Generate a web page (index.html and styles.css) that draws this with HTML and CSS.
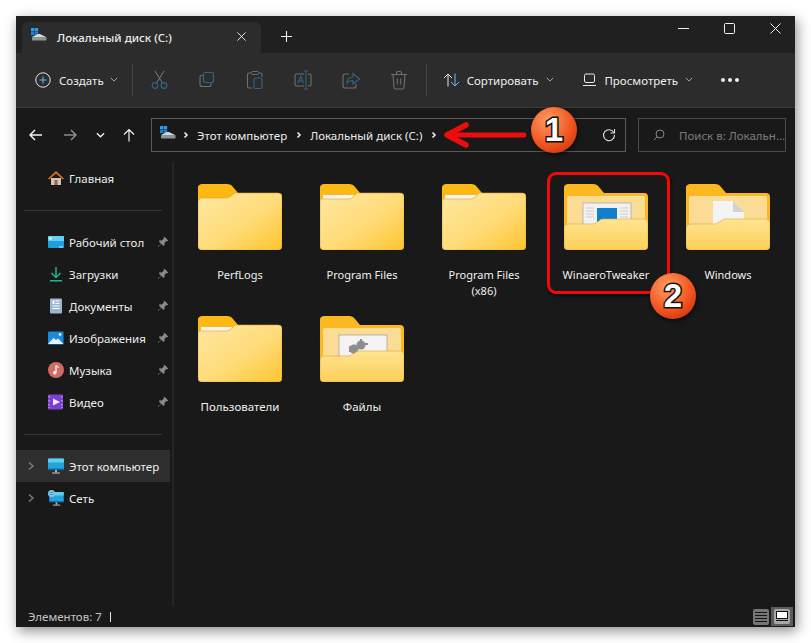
FILE: index.html
```html
<!DOCTYPE html>
<html lang="ru">
<head>
<meta charset="utf-8">
<title>Локальный диск (C:)</title>
<link rel="stylesheet" href="styles.css">
</head>
<body>
<svg class="defs" width="0" height="0" aria-hidden="true">
  <defs>
    <linearGradient id="fg" x1="0" y1="0" x2="1" y2="1"><stop offset="0" stop-color="#ffe8a2"/><stop offset=".55" stop-color="#ffdb78"/><stop offset="1" stop-color="#fdc52f"/></linearGradient>
    <linearGradient id="ff" x1="0" y1="0" x2="0" y2="1"><stop offset="0" stop-color="#ffe490"/><stop offset="1" stop-color="#fccf58"/></linearGradient>
    <symbol id="closed" viewBox="0 0 84 66">
      <path d="M0 5a4 4 0 0 1 4-5h25q4 0 6 3l5 6h40a4 4 0 0 1 4 4v20H0z" fill="#fdb813"/>
      <path d="M0 20V18q0-4 4-4h24q3 0 5-2l4-3h43q4 0 4 4v49q0 4-4 4H4q-4 0-4-4z" fill="url(#fg)" stroke="#d9a233" stroke-width=".6"/>
    </symbol>
    <symbol id="closedpaper" viewBox="0 0 84 66">
      <path d="M0 5a4 4 0 0 1 4-5h25q4 0 6 3l5 6h40a4 4 0 0 1 4 4v20H0z" fill="#fdb813"/>
      <path d="M3 11h32l-3 4H3z" fill="#f4f4f4"/>
      <path d="M0 20V18q0-4 4-3h24q3 0 5-2l4-4h43q4 0 4 4v49q0 4-4 4H4q-4 0-4-4z" fill="url(#fg)" stroke="#d9a233" stroke-width=".6"/>
    </symbol>
    <symbol id="openback" viewBox="0 0 84 66">
      <path d="M0 5a4 4 0 0 1 4-5h25q4 0 6 3l5 6h40a4 4 0 0 1 4 4v30H0z" fill="#fbb820"/>
      <rect x="3" y="12" width="78" height="32" rx="2" fill="#fbdc94"/>
    </symbol>
    <symbol id="openfront" viewBox="0 0 84 66">
      <path d="M0 44q0-4 4-4h24q3 0 5-2l2-1q1-2 4-2h41q4 0 4 4v23q0 4-4 4H4q-4 0-4-4z" fill="url(#ff)" stroke="#dba738" stroke-width=".6"/>
    </symbol>
    <symbol id="drive" viewBox="0 0 16 13">
      <rect x="0" y="0" width="3.4" height="3.4" fill="#2b9bea"/><rect x="3.8" y="0" width="3.4" height="3.4" fill="#2b9bea"/><rect x="0" y="3.8" width="3.4" height="3.4" fill="#1b7fd0"/><rect x="3.8" y="3.8" width="3.4" height="3.4" fill="#1b7fd0"/>
      <path d="M1 9l6-3h2l6 3z" fill="#d8d8d8"/><rect x="1" y="9" width="14.500" height="3.400" rx=".6" fill="#8d9296"/><rect x="2.500" y="10" width="1.500" height="1.200" fill="#4de05a"/>
    </symbol>
    <symbol id="pin" viewBox="0 0 12 12"><path d="M7.500.8l3.700 3.700-1 .8-.8-.2-2 2 .1 2.100-.9.900-2.300-2.300L1.200 11l-.3-.3 3.100-3.200L1.800 5.200l.9-.9 2.100.1 2-2-.2-.8z" fill="#8b8b8b"/></symbol>
    <symbol id="chev" viewBox="0 0 10 10"><path d="M3 1.500L7 5 3 8.500" fill="none" stroke="currentColor" stroke-width="1.500"/></symbol>
    <symbol id="crumbchev" viewBox="0 0 10 10"><path d="M3.500 2.500L6 5 3.500 7.500" fill="none" stroke="currentColor" stroke-width="1.600"/></symbol>
    <symbol id="down" viewBox="0 0 10 6"><path d="M1 1l4 4 4-4" fill="none" stroke="currentColor" stroke-width="1.100"/></symbol>
    <symbol id="monitor" viewBox="0 0 16 16"><rect x="0" y="0.500" width="16" height="11" rx="1" fill="#27a3d8"/><path d="M0 1.500q0-1 1-1h14q1 0 1 1v3H0z" fill="#5cd0ee"/><rect x="0" y="10.500" width="16" height="1.500" fill="#0f6f9f"/><rect x="7" y="12" width="2" height="2.500" fill="#a8b4ba"/><rect x="4" y="14.500" width="8" height="1" fill="#c4ccd0"/></symbol>
  </defs>
</svg>

<div class="window">
  <header class="titlebar">
    <div class="tab">
      <svg class="i-drive"><use href="#drive"/></svg>
      <span class="tab-title">Локальный диск (C:)</span>
      <svg class="tab-x" viewBox="0 0 10 10"><path d="M.5.500l9 9M9.500.500l-9 9" stroke="#e6e6e6" stroke-width="1.100"/></svg>
    </div>
    <svg class="tab-plus" viewBox="0 0 11 11"><path d="M5.500 0v11M0 5.500h11" stroke="#f0f0f0" stroke-width="1.100"/></svg>
    <div class="winctl">
      <svg class="wc" viewBox="0 0 11 11"><path d="M0 5.500h11" stroke="#f0f0f0" stroke-width="1"/></svg>
      <svg class="wc" viewBox="0 0 11 11"><rect x=".5" y=".5" width="10" height="10" rx="1" fill="none" stroke="#f0f0f0"/></svg>
      <svg class="wc" viewBox="0 0 11 11"><path d="M.5.500l10 10M10.500.500l-10 10" stroke="#f0f0f0" stroke-width="1"/></svg>
    </div>
  </header>

  <div class="toolbar">
    <div class="cmd cmd-new">
      <svg class="ico16" viewBox="0 0 16 16"><circle cx="8" cy="8" r="7.200" fill="none" stroke="#e4e4e4" stroke-width="1"/><path d="M8 4.500v7M4.500 8h7" stroke="#5cc1f5" stroke-width="1"/></svg>
      <span>Создать</span>
      <svg class="dn"><use href="#down"/></svg>
    </div>
    <i class="sep"></i>
    <div class="dim-group">
      <svg class="ico20" viewBox="0 0 20 20"><path d="M5 1l7.500 12M14 1L6.500 13" stroke="#7b7b7b" fill="none"/><circle cx="5" cy="15.500" r="2.800" fill="none" stroke="#2f6583" stroke-width="1.200"/><circle cx="14" cy="15.500" r="2.800" fill="none" stroke="#2f6583" stroke-width="1.200"/></svg>
      <svg class="ico20" viewBox="0 0 20 20"><rect x="6.500" y="2.500" width="10" height="10" rx="2" fill="none" stroke="#2f6583" stroke-width="1.200"/><path d="M6 5.500H5q-2 0-2 2v7q0 2 2 2h7q2 0 2-2v-1" fill="none" stroke="#6f6f6f" stroke-width="1.100"/></svg>
      <svg class="ico20" viewBox="0 0 20 20"><path d="M6 3H4q-1.500 0-1.500 1.500v12Q2.500 18 4 18h3M14 3h2q1 0 1 1.500V7" fill="none" stroke="#6f6f6f" stroke-width="1.100"/><rect x="6.500" y="1.500" width="7" height="3" rx="1" fill="none" stroke="#6f6f6f"/><rect x="9" y="8" width="8" height="10.500" rx="1.500" fill="none" stroke="#2f6583" stroke-width="1.200"/></svg>
      <svg class="ico20" viewBox="0 0 20 20"><path d="M11 4H3.500Q2 4 2 5.500v9Q2 16 3.500 16H11M15 4h1.500Q18 4 18 5.500v9q0 1.500-1.500 1.500H15" fill="none" stroke="#6f6f6f" stroke-width="1.100"/><path d="M13 1v18M11 1h4M11 19h4" stroke="#2f6583" stroke-width="1.100"/><path d="M5 13l2.800-6.500L10.600 13M6 11h3.600" stroke="#2f6583" fill="none" stroke-width="1.100"/></svg>
      <svg class="ico20" viewBox="0 0 20 20"><path d="M8 4H4Q2 4 2 6v10q0 2 2 2h9q2 0 2-2v-2" fill="none" stroke="#6f6f6f" stroke-width="1.100"/><path d="M6 13q0-6 6-6V3.500l6.500 5.500-6.500 5v-3.500q-4 0-6 2.500z" fill="none" stroke="#2f6583" stroke-width="1.200"/></svg>
      <svg class="ico20" viewBox="0 0 20 20"><path d="M2 4.500h16M7.500 4.500V3q0-1.500 1.500-1.500h2Q12.500 1.500 12.500 3v1.500M4 4.500l1 13q.1 1.500 1.500 1.500h7q1.400 0 1.500-1.500l1-13M8.300 8.500v6M11.700 8.500v6" fill="none" stroke="#6f6f6f" stroke-width="1.100"/></svg>
    </div>
    <i class="sep sep2"></i>
    <div class="cmd cmd-sort">
      <svg class="ico17" viewBox="0 0 17 14"><path d="M5 13.500V1M1 5l4-4 4 4" fill="none" stroke="#e4e4e4" stroke-width="1"/><path d="M12 .5V13M8 9l4 4 4-4" fill="none" stroke="#5cc1f5" stroke-width="1"/></svg>
      <span>Сортировать</span>
      <svg class="dn"><use href="#down"/></svg>
    </div>
    <div class="cmd cmd-view">
      <svg class="ico14" viewBox="0 0 14 14"><rect x="1.500" y="1" width="10" height="8.500" rx="1.500" fill="none" stroke="#e8e8e8"/><path d="M0 12.500h13" stroke="#e8e8e8"/></svg>
      <span>Просмотреть</span>
      <svg class="dn"><use href="#down"/></svg>
    </div>
    <div class="dots"><i></i><i></i><i></i></div>
  </div>

  <div class="navrow">
    <svg class="nav n-back" viewBox="0 0 14 12"><path d="M13 6H1.500M6 1L1 6l5 5" fill="none" stroke="#f2f2f2" stroke-width="1.500"/></svg>
    <svg class="nav n-fwd" viewBox="0 0 14 12"><path d="M1 6h11.500M8 1l5 5-5 5" fill="none" stroke="#8a8a8a" stroke-width="1.500"/></svg>
    <svg class="nav n-dn" viewBox="0 0 10 6"><path d="M1 1l4 4 4-4" fill="none" stroke="#f2f2f2" stroke-width="1.500"/></svg>
    <svg class="nav n-up" viewBox="0 0 12 14"><path d="M6 13.500V1.500M1 6.500l5-5 5 5" fill="none" stroke="#f2f2f2" stroke-width="1.200"/></svg>
    <div class="addr">
      <svg class="i-drive"><use href="#drive"/></svg>
      <svg class="crumb"><use href="#crumbchev"/></svg>
      <span>Этот компьютер</span>
      <svg class="crumb"><use href="#crumbchev"/></svg>
      <span>Локальный диск (C:)</span>
      <svg class="crumb"><use href="#crumbchev"/></svg>
      <svg class="refresh" viewBox="0 0 14 14"><path d="M11.800 4.500A5.500 5.500 0 1 0 12.500 7" fill="none" stroke="#e0e0e0" stroke-width="1.100"/><path d="M12.500 1v4h-4" fill="none" stroke="#e0e0e0" stroke-width="1.100"/></svg>
    </div>
    <div class="search">
      <svg class="mag" viewBox="0 0 12 12"><circle cx="7" cy="5" r="4" fill="none" stroke="#858585"/><path d="M4 8l-3 3" stroke="#858585"/></svg>
      <span>Поиск в: Локальн...</span>
    </div>
  </div>

  <div class="main">
    <nav class="side">
      <div class="row"><svg class="sic" viewBox="0 0 16 16"><path d="M3 8h10v7H3z" fill="#d2c3b2"/><rect x="6.500" y="10" width="3" height="5" fill="#8c6a50"/><path d="M8 1L0 8.500l1.200 1L8 3.500l6.800 6 1.200-1z" fill="#e36f1e"/></svg><span>Главная</span></div>
      <hr>
      <div class="row"><svg class="sic" viewBox="0 0 16 16"><rect y="2" width="16" height="12" rx="1" fill="#1f9fdc"/><path d="M0 3q0-1 1-1h14q1 0 1 1v4H0z" fill="#64d0f2"/><rect x="1.500" y="3.500" width="2" height="2" fill="#fff"/><rect x="11" y="12.500" width="4" height="1" fill="#bfe6f6"/></svg><span>Рабочий стол</span><svg class="pin"><use href="#pin"/></svg></div>
      <div class="row"><svg class="sic" viewBox="0 0 16 16"><path d="M8 1v10M3.500 7L8 11.500 12.500 7" fill="none" stroke="#22b38c" stroke-width="1.500"/><rect x="2" y="14" width="12" height="1.500" fill="#22b38c"/></svg><span>Загрузки</span><svg class="pin"><use href="#pin"/></svg></div>
      <div class="row"><svg class="sic" viewBox="0 0 16 16"><rect x="2" y="0.500" width="12" height="15" rx="1" fill="#9db6d0"/><path d="M7.500 3h4M7.500 5.500h4M4.500 8h7M4.500 10.500h7" stroke="#fff" stroke-width="1"/><rect x="4.500" y="2.500" width="2" height="3.500" fill="#fff"/></svg><span>Документы</span><svg class="pin"><use href="#pin"/></svg></div>
      <div class="row"><svg class="sic" viewBox="0 0 16 16"><rect y="1.500" width="15.500" height="13" rx="1" fill="#1b8ad8"/><path d="M0 14l5.500-6 2.500 2 2-1.500 5.500 5.500z" fill="#e8f4fb"/><circle cx="12" cy="4.500" r="1.300" fill="#fff"/></svg><span>Изображения</span><svg class="pin"><use href="#pin"/></svg></div>
      <div class="row"><svg class="sic" viewBox="0 0 16 16"><circle cx="8" cy="8" r="8" fill="#cf6d62"/><path d="M8 3.500v7" stroke="#fff" stroke-width="1.200"/><circle cx="6.800" cy="10.800" r="1.700" fill="#fff"/><path d="M8 3.500q2 .5 2.500 2.500" stroke="#fff" fill="none"/></svg><span>Музыка</span><svg class="pin"><use href="#pin"/></svg></div>
      <div class="row"><svg class="sic" viewBox="0 0 16 16"><rect y=".5" width="15" height="15" rx="1" fill="#7c3fd0"/><path d="M5 4.500l7 3.500-7 3.500z" fill="#f0e4ff"/><path d="M1 2v1.500M1 6v1.500M1 10v1.500M1 13v1M14 2v1.500M14 6v1.500M14 10v1.500M14 13v1" stroke="#d8bff5" stroke-width="1"/></svg><span>Видео</span><svg class="pin"><use href="#pin"/></svg></div>
      <hr class="hr2">
      <div class="row row-sel"><svg class="exp"><use href="#chev"/></svg><svg class="sic"><use href="#monitor"/></svg><span>Этот компьютер</span></div>
      <div class="row"><svg class="exp"><use href="#chev"/></svg><svg class="sic" viewBox="0 0 16 16"><use href="#monitor" x="1" y="1.500" width="15" height="14.500"/><circle cx="3.500" cy="3.500" r="3.500" fill="#7fc4ea"/><path d="M1.500 2.500h4M1.500 4.500h4" stroke="#2a7fb8" stroke-width=".6"/></svg><span>Сеть</span></div>
    </nav>

    <div class="files">
      <div class="item"><svg class="folder"><use href="#closed"/></svg><span class="lat">PerfLogs</span></div>
      <div class="item"><svg class="folder"><use href="#closedpaper"/></svg><span class="lat">Program Files</span></div>
      <div class="item"><svg class="folder"><use href="#closedpaper"/></svg><span class="lat narrow">Program Files (x86)</span></div>
      <div class="item">
        <svg class="folder" viewBox="0 0 84 66"><use href="#openback" width="84" height="66"/>
          <rect x="19" y="19" width="48" height="26" fill="#f1f1f1" stroke="#9a9a9a" stroke-width=".6"/><path d="M22 24h8M22 27h8M22 30h8M22 33h8M56 24h8M56 27h8M56 30h8M56 33h8" stroke="#cfcfcf"/><rect x="33" y="24" width="20" height="20" fill="#0f7fd0"/>
          <use href="#openfront" width="84" height="66"/></svg>
        <span class="lat">WinaeroTweaker</span>
      </div>
      <div class="item">
        <svg class="folder" viewBox="0 0 84 66"><use href="#openback" width="84" height="66"/>
          <path d="M27 17h20l11 11v17H27z" fill="#f4f4f4"/><path d="M47 17l11 11H47z" fill="#d2d2d2"/>
          <use href="#openfront" width="84" height="66"/></svg>
        <span class="lat">Windows</span>
      </div>
      <div class="item">
        <svg class="folder"><use href="#closedpaper"/></svg>
        <span>Пользователи</span>
      </div>
      <div class="item">
        <svg class="folder" viewBox="0 0 84 66"><use href="#openback" width="84" height="66"/>
          <rect x="19" y="19" width="48" height="26" fill="#f3f3f3" stroke="#8f8f8f" stroke-width=".6"/><circle cx="34" cy="33" r="4.500" fill="#8d8d8d"/><circle cx="41" cy="29" r="4.500" fill="#8d8d8d"/><path d="M40 23h2v3h-2zM45 27h3v2h-3zM29 30h3v6h-3zM33 37h3v3h-3z" fill="#8d8d8d"/>
          <use href="#openfront" width="84" height="66"/></svg>
        <span>Файлы</span>
      </div>
    </div>
  </div>

  <footer class="status">
    <span>Элементов: 7</span><i class="bar"></i>
    <div class="views">
      <div class="v-list"><i></i><i></i><i></i><i></i></div>
      <div class="v-tile"><div class="v-inner"><b></b><i></i></div></div>
    </div>
  </footer>
</div>

<div class="mark-rect"></div>
<svg class="mark-arrow" viewBox="0 0 82 26"><path d="M80 13H12" stroke="#ee0d0d" stroke-width="5" stroke-linecap="round"/><path d="M22 3L3 13l19 10" fill="none" stroke="#ee0d0d" stroke-width="5.500" stroke-linecap="round" stroke-linejoin="round"/></svg>
<div class="badge b1">1</div>
<div class="badge b2">2</div>
</body>
</html>
```

FILE: styles.css
```css
* { box-sizing: border-box; }
html, body { margin: 0; height: 100%; }
body {
  background: #fff;
  padding: 16px;
  font-family: "Noto Sans", "Open Sans", sans-serif;
  font-size: 12px;
  color: #f0f0f0;
  overflow: hidden;
}
.defs { position: absolute; }
svg { display: block; flex: none; }
i { display: block; }

.window {
  width: 779px;
  height: 611px;
  display: flex;
  flex-direction: column;
  background: #191919;
  box-shadow: 2px 4px 12px rgba(0, 0, 0, .45);
}

.titlebar { height: 37px; flex: none; background: #202020; display: flex; align-items: flex-end; padding-left: 6px; }
.tab {
  width: 239px; height: 31px;
  background: #2c2c2c;
  border-radius: 6px 6px 0 0;
  display: flex; align-items: center;
  padding-left: 9px;
}
.i-drive { width: 16px; height: 13px; }
.tab .i-drive { margin-top: -7px; }
.tab-title { margin-left: 10px; font-weight: 500; font-size: 11.5px; width: 180px; color: #ececec; }
.tab-x { width: 9px; height: 9px; margin-top: -3px; }
.tab-plus { width: 11px; height: 11px; margin: 0 0 11px 20px; }
.winctl { margin-left: auto; display: flex; gap: 35px; align-self: flex-start; padding: 7px 14px 0 0; }
.wc { width: 11px; height: 11px; }

.toolbar {
  height: 55px; flex: none;
  background: #2c2c2c;
  border-bottom: 1px solid #3c3c3c;
  display: flex; align-items: center;
  padding-left: 19px;
  font-size: 11.500px;
  color: #ececec;
}
.cmd { display: flex; align-items: center; }
.ico16 { width: 16px; height: 16px; }
.ico17 { width: 17px; height: 14px; }
.ico14 { width: 14px; height: 14px; }
.ico20 { width: 20px; height: 20px; }
.dn { width: 8px; height: 5px; color: #b8b8b8; margin-left: 6px; margin-top: -1px; }
.cmd-new span { margin-left: 8px; }
.sep { width: 1px; height: 32px; background: #444; margin-left: 14px; }
.sep2 { margin-left: 17px; }
.dim-group { display: flex; gap: 27.800px; margin-left: 17px; }
.cmd-sort { margin-left: 16px; }
.cmd-sort span { margin-left: 7px; }
.cmd-sort .dn { margin-left: 8px; }
.cmd-view { margin-left: 29px; }
.cmd-view span { margin-left: 7px; }
.cmd-view .dn { margin-left: 7px; }
.dots { display: flex; gap: 3px; margin-left: 28px; }
.dots i { width: 4px; height: 4px; border-radius: 50%; background: #eee; }

.navrow { height: 52px; flex: none; display: flex; align-items: center; padding: 2px 9px 0 0; }
.nav { height: 12px; }
.n-back { width: 14px; margin-left: 13px; }
.n-fwd { width: 14px; margin-left: 20px; }
.n-dn { width: 9px; height: 6px; margin-left: 19px; }
.n-up { width: 12px; height: 14px; margin-left: 18px; }
.addr {
  width: 475px; height: 34px;
  margin-left: 16px;
  border: 1px solid #5a5a5a;
  display: flex; align-items: center;
  padding-left: 8px;
  font-size: 11.500px;
  color: #ececec;
}
.addr .i-drive { margin-top: -6px; }
.crumb { width: 10px; height: 10px; margin: 0 6.500px; color: #eee; }
.addr .i-drive + .crumb { margin-left: 5px; margin-right: 6px; }
.refresh { width: 14px; height: 14px; margin-left: auto; margin-right: 9px; }
.search {
  width: 148px; height: 34px;
  margin-left: 12px;
  border: 1px solid #4a4a4a;
  display: flex; align-items: center;
  padding-left: 14px;
  color: #7d7d7d;
  font-size: 11.500px;
  white-space: nowrap;
}
.mag { width: 12px; height: 12px; margin-right: 14px; }

.main { flex: 1; min-height: 0; display: flex; }
.side {
  width: 158px; flex: none;
  border-right: 2px solid #242424;
  margin-top: 2px;
  font-size: 11.500px;
}
.row { height: 32px; display: flex; align-items: center; padding-left: 32px; position: relative; color: #ededed; }
.row-sel { background: #2f2f2f; width: 154px; }
.sic { width: 16px; height: 16px; margin-right: 5px; }
.exp { width: 10px; height: 10px; color: #7a7a7a; margin: 0 12px 0 -22px; }
.pin { width: 12px; height: 12px; position: absolute; left: 141px; top: 10px; }
.side hr { border: 0; height: 1px; background: #333; margin: 16px 9px 15px 8px; width: 138px; }
.side .hr2 { margin: 16px 9px 15px 8px; }

.files {
  flex: 1;
  display: grid;
  grid-template-columns: repeat(5, 122px);
  grid-auto-rows: 132px;
  padding: 24px 0 0 5px;
  align-content: start;
}
.item { display: flex; flex-direction: column; align-items: center; text-align: center; font-size: 11.500px; line-height: 16px; color: #f0f0f0; }
.folder { width: 84px; height: 66px; margin-bottom: 17px; }
.item span { width: 100px; }
.item .lat { font-size: 11px; }
.item .narrow { width: 84px; }

.status { height: 21px; flex: none; display: flex; align-items: center; padding-left: 12px; color: #c4c4c4; font-size: 11.500px; }
.bar { width: 1px; height: 10px; background: #e6e6e6; margin-left: 8px; }
.views { margin-left: auto; display: flex; align-items: center; gap: 2px; margin-right: 2px; }
.v-list { width: 16px; height: 16px; background: #767676; border-radius: 2px; display: flex; flex-direction: column; justify-content: center; gap: 2px; padding: 0 2px; }
.v-list i { height: 1px; background: #141414; }
.v-tile { width: 22px; height: 19px; background: #5c5c5c; padding: 2px 3px; }
.v-inner { width: 16px; height: 15px; background: #a8a8a8; border-radius: 2px; padding: 2px; }
.v-inner b { display: block; height: 8px; background: #fff; border: 1px solid #111; }
.v-inner i { height: 1px; background: #111; margin-top: 1px; }

.mark-rect {
  position: absolute; left: 547px; top: 172px;
  width: 123px; height: 122px;
  border: 3px solid #f30808;
  border-radius: 9px;
  box-shadow: 1px 2px 3px rgba(0, 0, 0, .7);
}
.mark-arrow { position: absolute; left: 444px; top: 122px; width: 82px; height: 26px; }
.badge {
  position: absolute;
  width: 46px; height: 46px;
  border-radius: 50%;
  background: radial-gradient(circle at 38% 30%, #ff9d62 0%, #f2551f 55%, #c52109 100%);
  box-shadow: 1px 2px 4px rgba(0, 0, 0, .55);
  display: flex; align-items: center; justify-content: center;
  font-family: "Liberation Sans", sans-serif;
  font-weight: 700;
  font-size: 33px;
  color: #fff;
  -webkit-text-stroke: 3px #111;
  paint-order: stroke fill;
}
.b1 { left: 531px; top: 107px; }
.b2 { left: 650px; top: 273px; }
```
